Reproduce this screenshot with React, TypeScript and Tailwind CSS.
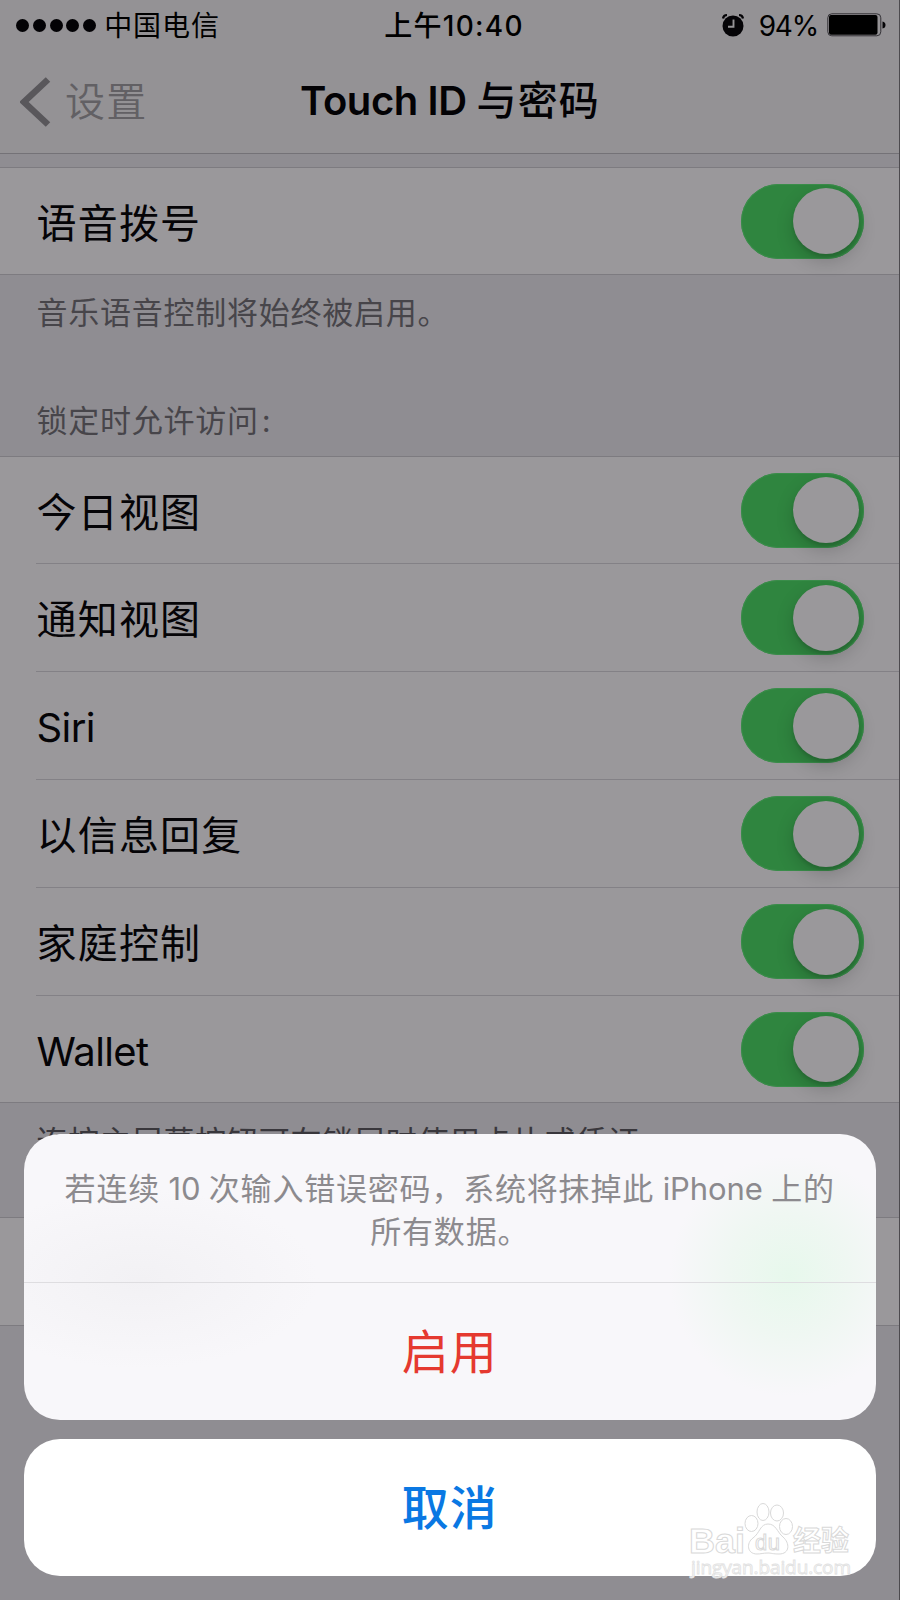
const rows = ["今日视图", "通知视图", "Siri", "以信息回复", "家庭控制", "Wallet"];

function Toggle() {
  return (
    <div className="flex h-[75px] w-[123px] shrink-0 items-center justify-end rounded-full bg-[#2f853f] pr-[5px] shadow-[inset_0_0_0_1px_#3a8d4a]">
      <div className="size-[66px] rounded-full bg-[#9a989b] shadow-[0_7px_18px_rgba(0,0,0,0.18),0_3px_3px_rgba(0,0,0,0.1)]" />
    </div>
  );
}

function Row({ label, first, last }: { label: string; first?: boolean; last?: boolean }) {
  const height = last ? "h-[106px]" : first ? "h-[107px]" : "h-[108px]";
  return (
    <div className={`${height} flex items-center justify-between pr-9 ${last ? "pl-9" : "ml-9 border-b border-[#838186]"}`}>
      <span className="pt-[5px] pl-[0.5px] text-[40px] leading-[56px] tracking-[1.2px] text-[#050407]">
        {/^[A-Z]/.test(label) ? <span className="tracking-[-0.6px]">{label}</span> : label}
      </span>
      <Toggle />
    </div>
  );
}

function StatusBar() {
  return (
    <div className="flex h-[50px] items-center justify-between pr-[14px] pl-4 text-black">
      <div className="flex w-[300px] items-center">
        <div className="flex gap-[3.8px]">
          {[0, 1, 2, 3, 4].map((n) => (
            <i key={n} className="size-[13px] rounded-full bg-[#030205]" />
          ))}
        </div>
        <span className="ml-2 pt-px text-[28px] leading-[40px] tracking-[0.9px]">中国电信</span>
      </div>
      <span className="pt-px pl-[6px] text-[28px] leading-[40px] font-medium tracking-[1.3px]">上午10:40</span>
      <div className="flex w-[300px] items-center justify-end">
        <svg width="24" height="24" viewBox="0 0 24 24" className="mr-[14px]">
          <circle cx="12" cy="13" r="10.5" fill="#050407" />
          <path d="M2 5.500Q2.500 2 6 2" fill="none" stroke="#050407" strokeWidth="2.200" />
          <path d="M22 5.500Q21.500 2 18 2" fill="none" stroke="#050407" strokeWidth="2.200" />
          <path d="M12.500 6.500V13.800H7" fill="none" stroke="#949295" strokeWidth="1.900" />
        </svg>
        <span className="pt-px text-[28px] leading-[40px] tracking-[-1.2px]">94%</span>
        <svg width="59" height="24" viewBox="0 0 59 24" className="ml-[9px]">
          <rect x="0.800" y="0.800" width="53" height="22" rx="4" fill="none" stroke="#333136" strokeWidth="1" />
          <rect x="2" y="2" width="48.500" height="19.700" rx="2" fill="#000" />
          <path d="M55.500 8.500Q58.500 9 58.500 12T55.500 15.500Z" fill="#050407" />
        </svg>
      </div>
    </div>
  );
}

function Watermark() {
  return (
    <svg
      className="absolute top-[1500px] left-[684px]"
      width="176"
      height="84"
      viewBox="0 0 176 84"
      fill="#fff"
      stroke="#d9d9d9"
      strokeWidth="1"
    >
      <g fontFamily="Liberation Sans, Noto Sans CJK SC, sans-serif" fontWeight="700">
        <text x="5" y="53" fontSize="35" textLength="56" lengthAdjust="spacingAndGlyphs">Bai</text>
        <ellipse cx="67.500" cy="23.500" rx="6.500" ry="8" />
        <ellipse cx="79" cy="12" rx="6" ry="8.500" />
        <ellipse cx="93" cy="13" rx="6.500" ry="8" />
        <ellipse cx="102" cy="26.500" rx="6.500" ry="8" />
        <path d="M84 24C92 24 93 32 99 37C106 43 106 54 95 54C89 54 87 53 84 53C79 53 77 54 73 54C63 54 62 43 69 38C76 33 76 24 84 24Z" />
        <text x="71" y="50" fontSize="22" fontWeight="400" textLength="25">du</text>
        <text x="109" y="51" fontSize="28" textLength="56">经验</text>
      </g>
      <text
        x="7"
        y="74"
        fontSize="19"
        fontFamily="Open Sans, sans-serif"
        stroke="#e2e2e2"
        strokeWidth="0.900"
        textLength="160"
      >
        jingyan.baidu.com
      </text>
    </svg>
  );
}

export default function App() {
  return (
    <div className="relative h-[1600px] w-[900px] overflow-hidden bg-[#8f8d92] font-['Inter','Noto_Sans_CJK_SC',sans-serif]">
      <header className="h-[154px] border-b-[1px] border-[#747277] bg-[#949295]">
        <StatusBar />
        <div className="grid h-[103px] grid-cols-[300px_300px_300px] items-center">
          <div className="flex items-center pl-5">
            <svg width="31" height="50" viewBox="0 0 31 50" fill="none" stroke="#59575b" strokeWidth="6.500">
              <path d="M28 2.500 4 25 28 47.500" />
            </svg>
            <span className="ml-[14px] text-[40px] leading-[56px] font-[350] tracking-[1.2px] text-[#626064]">设置</span>
          </div>
          <h1 className="pb-px text-[40px] leading-[56px] font-semibold tracking-[-0.4px] whitespace-nowrap text-[#030205]">
            Touch ID <span className="font-medium tracking-[1.2px]">与密码</span>
          </h1>
        </div>
      </header>

      <section className="mt-[13px] border-y border-[#7d7b80] bg-[#9a989b]">
        <Row label="语音拨号" last />
      </section>
      <div className="flex h-[181px] flex-col justify-between px-[36.5px] pt-[16px] pb-[13px] text-[31px] leading-[44px] tracking-[0.75px] text-[#47454a]">
        <p>音乐语音控制将始终被启用。</p>
        <p>
          锁定时允许访问<span className="ml-[3px]">:</span>
        </p>
      </div>
      <section className="border-y border-[#7d7b80] bg-[#9a989b]">
        {rows.map((r, i) => (
          <Row key={r} label={r} first={i === 0} last={i === rows.length - 1} />
        ))}
      </section>
      <p className="h-[114px] px-[36.5px] pt-[17px] text-[31px] leading-[44px] tracking-[0.75px] text-[#39373c]">
        连按主屏幕按钮可在锁屏时使用卡片或凭证。
      </p>
      <section className="h-[109px] border-y border-[#7d7b80] bg-[#9a989b]" />

      <div className="absolute top-0 right-0 h-[1600px] w-px bg-[#4c4a4e]" />

      <div className="absolute top-[1134px] left-6 flex w-[851.5px] flex-col gap-[19px]">
        <div className="h-[286px] overflow-hidden rounded-[36px] bg-[#f8f7fa] bg-[radial-gradient(ellipse_120px_120px_at_765px_142px,#e7f8ec_0%,#eff7f2_50%,transparent_100%),radial-gradient(ellipse_180px_90px_at_115px_145px,#f2f1f4_0%,transparent_100%)]">
          <p className="h-[149px] border-b border-[#deddE0] pt-[33px] text-center text-[31px] leading-[43px] tracking-[0.8px] whitespace-nowrap text-[#8c8a8e]">
            若连续<span className="tracking-[-0.2px]"> 10 </span>次输入错误密码，系统将抹掉此
            <span className="tracking-[-0.1px]"> iPhone </span>上的
            <br />
            所有数据。
          </p>
          <button className="block h-[137px] w-full text-[47px] leading-[64px] tracking-[1px] text-[#e5392f]">
            启用
          </button>
        </div>
        <button className="h-[137px] w-full rounded-[36px] bg-white text-[47px] leading-[64px] font-medium tracking-[1px] text-[#0a78e3]">
          取消
        </button>
      </div>
      <Watermark />
    </div>
  );
}
